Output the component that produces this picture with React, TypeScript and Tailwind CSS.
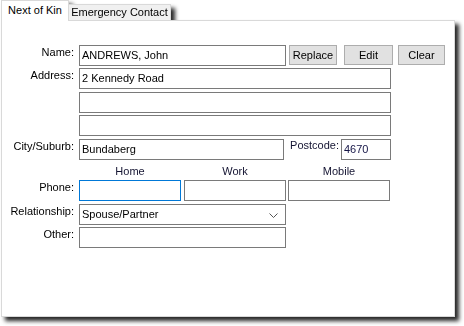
import React from 'react';

const box = "h-[21px] border border-[#7a7a7a] bg-white flex items-center pl-[2px] whitespace-nowrap overflow-hidden";
const btn = "h-[20px] border border-[#adadad] bg-[#e1e1e1] flex items-center justify-center";

function Label({ text, w = "w-[72px]" }: { text: string; w?: string }) {
  return <div className={`${w} text-right pt-[1px] shrink-0`}>{text}</div>;
}

export default function App() {
  return (
    <div className="w-[464px] h-[326px] bg-white overflow-hidden font-['Liberation_Sans',Arial,sans-serif] text-[11px] leading-[13px] text-black">
      <div className="pl-[1px] w-[460px] [filter:drop-shadow(4px_4px_2px_rgba(0,0,0,0.85))]">
        {/* tabs */}
        <div className="flex items-start h-[20px]">
          <div className="relative z-10 w-[68px] h-[21px] bg-white border border-b-0 border-[#d9d9d9] text-center pt-[3px]">
            Next of Kin
          </div>
          <div className="mt-[4px] w-[102px] h-[16px] bg-[#f0f0f0] border border-l-0 border-b-0 border-[#d9d9d9] text-center pt-[1px]">
            Emergency Contact
          </div>
        </div>

        {/* panel */}
        <div className="w-[454px] h-[297px] bg-white border border-[#d9d9d9] pt-[24px]">
          {/* name */}
          <div className="flex items-start">
            <Label text="Name:" />
            <div className={`${box} ml-[5px] w-[207px]`}>ANDREWS, John</div>
            <div className={`${btn} ml-[3px] w-[48px]`}>Replace</div>
            <div className={`${btn} ml-[7px] w-[49px]`}>Edit</div>
            <div className={`${btn} ml-[5px] w-[47px]`}>Clear</div>
          </div>

          {/* address */}
          <div className="flex items-start mt-[2px]">
            <Label text="Address:" />
            <div className={`${box} ml-[5px] w-[312px]`}>2 Kennedy Road</div>
          </div>
          <div className="flex items-start mt-[3px] pl-[77px]">
            <div className={`${box} w-[312px]`}></div>
          </div>
          <div className="flex items-start mt-[2px] pl-[77px]">
            <div className={`${box} w-[312px]`}></div>
          </div>

          {/* city / postcode */}
          <div className="flex items-start mt-[3px]">
            <Label text="City/Suburb:" />
            <div className={`${box} ml-[5px] w-[205px]`}>Bundaberg</div>
            <div className="w-[55px] text-right shrink-0 text-[#141432]">Postcode:</div>
            <div className={`${box} ml-[2px] w-[50px] text-[#141446]`}>4670</div>
          </div>

          {/* phone headers */}
          <div className="flex items-start mt-[5px] pl-[77px] text-[#141432]">
            <div className="w-[102px] text-center">Home</div>
            <div className="ml-[3px] w-[102px] text-center">Work</div>
            <div className="ml-[2px] w-[102px] text-center">Mobile</div>
          </div>

          {/* phone */}
          <div className="flex items-start mt-[2px]">
            <Label text="Phone:" />
            <div className={`${box} ml-[5px] w-[102px] border-[#0078d7]`}></div>
            <div className={`${box} ml-[3px] w-[102px]`}></div>
            <div className={`${box} ml-[2px] w-[102px]`}></div>
          </div>

          {/* relationship */}
          <div className="flex items-start mt-[3px]">
            <Label text="Relationship:" />
            <div className={`${box} ml-[5px] w-[207px] justify-between pr-[7px]`}>
              <span>Spouse/Partner</span>
              <svg width="9" height="5" viewBox="0 0 9 5" className="mt-[1px]">
                <polyline points="0.5,0.5 4.5,4.5 8.5,0.5" fill="none" stroke="#555" strokeWidth="1" />
              </svg>
            </div>
          </div>

          {/* other */}
          <div className="flex items-start mt-[2px]">
            <Label text="Other:" />
            <div className={`${box} ml-[5px] w-[207px]`}></div>
          </div>
        </div>
      </div>
    </div>
  );
}
